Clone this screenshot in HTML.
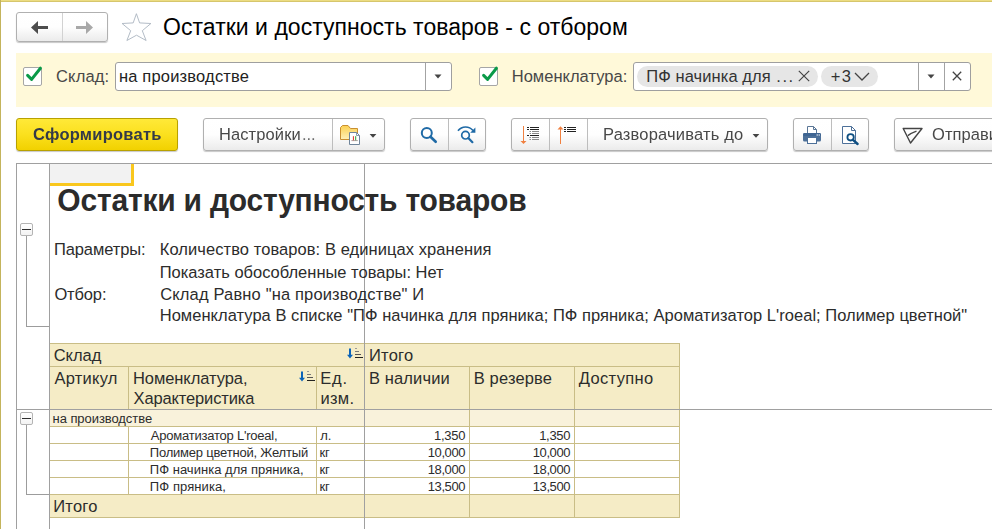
<!DOCTYPE html>
<html><head><meta charset="utf-8"><title>1C</title>
<style>
*{box-sizing:border-box;margin:0;padding:0}
html,body{width:992px;height:529px;overflow:hidden;background:#fff}
body{font-family:"Liberation Sans",sans-serif;font-size:16px;color:#333;position:relative}
.a{position:absolute;display:block}
.t{position:absolute;white-space:nowrap;display:block}
.btn{position:absolute;border:1px solid #b0b0b0;border-radius:3px;background:linear-gradient(#ffffff 0%,#fefefe 50%,#ebebeb 100%);box-shadow:0 1px 1px rgba(0,0,0,.22)}
.dv{position:absolute;top:0;bottom:0;width:1px;background:#bdbdbd}
.inp .dv{background:#a3a3a3}
.inp{position:absolute;border:1px solid #9f9f9f;border-radius:3px;background:#fff}
.chk{position:absolute;width:19px;height:19px;border:1px solid #a6a6a6;border-radius:2px;background:#fff}

</style></head><body>
<div class="a" style="left:0px;top:0px;width:992px;height:2px;background:linear-gradient(#f7e78c,#cbbb62);"></div>
<div class="a" style="left:0px;top:0px;width:1px;height:529px;background:#c4b45c;"></div>
<div class="btn" style="left:16px;top:12px;width:92px;height:30px;"><div class="dv" style="left:45px;background:#d2d2d2"></div></div>
<svg class="a" style="left:30px;top:20px" width="20" height="15" viewBox="0 0 20 15"><path d="M1 7.5 L8 1 V6 H18 V9 H8 V14 Z" fill="#4d4d4d"/></svg>
<svg class="a" style="left:74px;top:20px" width="20" height="15" viewBox="0 0 20 15"><path d="M19 7.5 L12 1 V6 H2 V9 H12 V14 Z" fill="#a8a8a8"/></svg>
<svg class="a" style="left:121px;top:13px" width="31" height="29" viewBox="0 0 31 29"><path d="M15.4 0.7 L18.6 9.9 L29.9 10.5 L21.3 17.7 L25.1 27.5 L15.5 22.2 L5.9 27.5 L9.7 17.7 L1.1 10.5 L12.2 9.9 Z" fill="#fff" stroke="#aab4bf" stroke-width="0.9"/></svg>
<div class="t" style="top:7px;font-size:23px;line-height:40px;color:#000;left:163.12px;letter-spacing:0.027512207031249146px;transform:scaleY(1.07);transform-origin:0 28px;">Остатки и доступность товаров - с отбором</div>
<div class="a" style="left:16px;top:53px;width:976px;height:54px;background:#fff9d9;"></div>
<div class="chk" style="left:23px;top:67px"></div>
<svg class="a" style="left:23px;top:66px" width="21" height="21" viewBox="0 0 21 21"><path d="M4.6 9.4 L8.6 13.4 L17.4 2.2" fill="none" stroke="#0a9a48" stroke-width="3" stroke-linecap="round" stroke-linejoin="round"/></svg>
<div class="t" style="top:66px;font-size:16.5px;line-height:20px;color:#484848;left:56.03px;letter-spacing:0.16559570312500113px;transform:scaleY(1.045);transform-origin:0 16px;">Склад:</div>
<div class="inp" style="left:115px;top:62px;width:337px;height:29px"><div class="dv" style="left:309px"></div></div>
<div class="t" style="top:66px;font-size:16.5px;line-height:20px;color:#222;left:118.97px;letter-spacing:0.17652762276785797px;transform:scaleY(1.045);transform-origin:0 16px;">на производстве</div>
<svg class="a" style="left:434px;top:74px" width="8" height="5" viewBox="0 0 8 5"><path d="M0.5 0.5 H7.5 L4 4.5 Z" fill="#444"/></svg>
<div class="chk" style="left:479px;top:67px"></div>
<svg class="a" style="left:479px;top:66px" width="21" height="21" viewBox="0 0 21 21"><path d="M4.6 9.4 L8.6 13.4 L17.4 2.2" fill="none" stroke="#0a9a48" stroke-width="3" stroke-linecap="round" stroke-linejoin="round"/></svg>
<div class="t" style="top:66px;font-size:16.5px;line-height:20px;color:#484848;left:511.71px;letter-spacing:0.02207031249999621px;transform:scaleY(1.045);transform-origin:0 16px;">Номенклатура:</div>
<div class="inp" style="left:633px;top:62px;width:338px;height:29px"><div class="dv" style="left:284px"></div><div class="dv" style="left:310px"></div></div>
<div class="a" style="left:637px;top:66px;width:181px;height:21px;background:#e6e6e6;border-radius:10.5px"></div>
<div class="a" style="left:821px;top:66px;width:57px;height:21px;background:#e6e6e6;border-radius:10.5px"></div>
<div class="t" style="top:66px;font-size:16.5px;line-height:20px;color:#333;left:646.31px;letter-spacing:0.07387319711538637px;transform:scaleY(1.045);transform-origin:0 16px;">ПФ начинка для</div>
<div class="t" style="top:66px;font-size:16.5px;line-height:20px;color:#333;left:776.31px;letter-spacing:1.513427734375px;transform:scaleY(1.045);transform-origin:0 16px;">...</div>
<svg class="a" style="left:798px;top:70px" width="12" height="12" viewBox="0 0 12 12"><path d="M0.8 0.8 L11.2 11.2 M11.2 0.8 L0.8 11.2" stroke="#444" stroke-width="1.15" fill="none"/></svg>
<div class="t" style="top:66px;font-size:16.5px;line-height:20px;color:#333;left:830.83px;letter-spacing:1.2298828125000227px;transform:scaleY(1.045);transform-origin:0 16px;">+3</div>
<svg class="a" style="left:854px;top:72px" width="16" height="9" viewBox="0 0 16 9"><path d="M1 1 L8 8 L15 1" stroke="#444" stroke-width="1.3" fill="none"/></svg>
<svg class="a" style="left:927px;top:74px" width="8" height="5" viewBox="0 0 8 5"><path d="M0.5 0.5 H7.5 L4 4.5 Z" fill="#444"/></svg>
<svg class="a" style="left:952px;top:71px" width="10" height="10" viewBox="0 0 10 10"><path d="M0.8 0.8 L9.2 9.2 M9.2 0.8 L0.8 9.2" stroke="#444" stroke-width="1.3" fill="none"/></svg>
<div class="btn" style="left:16px;top:118px;width:162px;height:33px;background:linear-gradient(#ffe938 0%,#fbe01e 50%,#f1d100 100%);border-color:#b8a100"></div>
<div class="t" style="top:124px;font-size:16.5px;line-height:20px;color:#343a48;left:32.98px;font-weight:bold;letter-spacing:0.24802024147727375px;transform:scaleY(1.045);transform-origin:0 16px;will-change:transform;">Сформировать</div>
<div class="btn" style="left:203px;top:118px;width:182px;height:33px;"><div class="dv" style="left:128px"></div></div>
<div class="t" style="top:124px;font-size:16.5px;line-height:20px;color:#484848;left:219.31px;letter-spacing:0.09388427734375071px;transform:scaleY(1.045);transform-origin:0 16px;will-change:transform;">Настройки</div>
<div class="t" style="top:124px;font-size:16.5px;line-height:20px;color:#6a6a6a;left:301.71px;letter-spacing:-0.13657226562500568px;transform:scaleY(1.045);transform-origin:0 16px;will-change:transform;">...</div>
<svg class="a" style="left:339px;top:124px" width="23" height="22" viewBox="0 0 23 22"><defs><linearGradient id="fg" x1="0" y1="0" x2="0" y2="1"><stop offset="0" stop-color="#fbd050"/><stop offset="1" stop-color="#fff0b8"/></linearGradient></defs>
<path d="M1.5 15.5 V3.5 L3.5 1.5 H9 L11.5 4.5 H18.5 V15.5 Z" fill="url(#fg)" stroke="#c98f30" stroke-width="1"/>
<path d="M10.5 8.5 H17.5 L20.5 11.5 V20.5 H10.5 Z" fill="#fff" stroke="#70859a" stroke-width="1"/>
<path d="M17.5 8.5 V11.5 H20.5" fill="none" stroke="#70859a" stroke-width="0.8"/>
<path d="M12.4 16.6 H18.8" stroke="#9a8a8a" stroke-width="0.8"/>
<path d="M14.4 12.2 V16.3" stroke="#e03020" stroke-width="1"/><path d="M16.7 12.2 V16.3" stroke="#30a030" stroke-width="1"/></svg>
<svg class="a" style="left:369px;top:134px" width="8" height="4" viewBox="0 0 8 4"><path d="M0.6 0 H7.4 L4 3.7 Z" fill="#444"/></svg>
<div class="btn" style="left:410px;top:118px;width:76px;height:33px;"><div class="dv" style="left:37px"></div></div>
<svg class="a" style="left:418px;top:125px" width="22" height="20" viewBox="0 0 22 20"><circle cx="8.8" cy="8" r="5" fill="none" stroke="#1f6aa6" stroke-width="2"/><path d="M12.5 11.7 L17.7 16.8" stroke="#1f6aa6" stroke-width="2.6" stroke-linecap="round"/></svg>
<svg class="a" style="left:455px;top:124px" width="24" height="21" viewBox="0 0 24 21"><circle cx="10.5" cy="11.2" r="3.8" fill="none" stroke="#1f6aa6" stroke-width="1.7"/><path d="M13.3 14 L17.4 18.2" stroke="#1f6aa6" stroke-width="2.2" stroke-linecap="round"/><path d="M3 6.8 C7 1.8 14 1.8 18 6.5" fill="none" stroke="#1f6aa6" stroke-width="1.7"/><path d="M20.4 3.6 V8.8 H15.2 Z" fill="#1f6aa6"/></svg>
<div class="btn" style="left:511px;top:118px;width:257px;height:33px;"><div class="dv" style="left:37px"></div><div class="dv" style="left:75px"></div></div>
<svg class="a" style="left:517px;top:126px" width="24" height="19" viewBox="0 0 24 19"><path d="M6.5 0 V17" stroke="#f08040" stroke-width="1"/><path d="M3.5 15 H9.5 L6.5 18 Z" fill="#f08040"/><path d="M10 1.5 H12 M13 1.5 H22" stroke="#222" stroke-width="1"/><path d="M10 3.5 H12 M13 3.5 H22" stroke="#222" stroke-width="1"/><path d="M12.5 5.5 H14 M15 5.5 H22" stroke="#8a8a8a" stroke-width="1"/><path d="M12.5 7.5 H14 M15 7.5 H22" stroke="#8a8a8a" stroke-width="1"/><path d="M10 9.5 H12 M13 9.5 H22" stroke="#222" stroke-width="1"/><path d="M12.5 11.5 H14 M15 11.5 H22" stroke="#8a8a8a" stroke-width="1"/><path d="M12.5 13.5 H14 M15 13.5 H22" stroke="#8a8a8a" stroke-width="1"/></svg>
<svg class="a" style="left:556px;top:126px" width="22" height="19" viewBox="0 0 22 19"><path d="M4.5 1 V18" stroke="#f08040" stroke-width="1"/><path d="M1.5 3.5 H7.5 L4.5 0.2 Z" fill="#f08040"/><path d="M8 1.5 H10 M11 1.5 H20" stroke="#222" stroke-width="1"/><path d="M8 3.5 H10 M11 3.5 H20" stroke="#222" stroke-width="1"/><path d="M8 5.5 H10 M11 5.5 H20" stroke="#222" stroke-width="1"/></svg>
<div class="t" style="top:124px;font-size:16.5px;line-height:20px;color:#484848;left:603.11px;letter-spacing:0.18313476562500455px;transform:scaleY(1.045);transform-origin:0 16px;will-change:transform;">Разворачивать до</div>
<svg class="a" style="left:752px;top:134px" width="8" height="4" viewBox="0 0 8 4"><path d="M0.6 0 H7.4 L4 3.7 Z" fill="#444"/></svg>
<div class="btn" style="left:793px;top:118px;width:76px;height:33px;"><div class="dv" style="left:37px"></div></div>
<svg class="a" style="left:802px;top:125px" width="20" height="20" viewBox="0 0 20 20"><path d="M5.5 8 V1.5 H11.5 L14.5 4.5 V8" fill="#fff" stroke="#5a7696" stroke-width="1"/><path d="M11.5 1.5 V4.5 H14.5" fill="none" stroke="#5a7696" stroke-width="1"/>
<rect x="1" y="8" width="18" height="8.5" rx="1.5" fill="#4d7099"/><rect x="1" y="8" width="18" height="3" rx="1.5" fill="#3f6592"/>
<rect x="5.5" y="12.5" width="9" height="6" fill="#fff" stroke="#4d7099" stroke-width="1"/><rect x="14.6" y="9.4" width="1.2" height="1.2" fill="#fff"/><rect x="16.6" y="9.4" width="1.2" height="1.2" fill="#fff"/></svg>
<svg class="a" style="left:841px;top:125px" width="20" height="21" viewBox="0 0 20 21"><path d="M1.5 1.5 H10.5 L14.5 5.5 V18.5 H1.5 Z" fill="#fff" stroke="#4d7099" stroke-width="1"/><path d="M10.5 1.5 V5.5 H14.5" fill="none" stroke="#4d7099" stroke-width="1"/>
<circle cx="9.6" cy="12.3" r="3.2" fill="#fff" stroke="#0e4f82" stroke-width="1.8"/><path d="M12 14.8 L16.6 19" stroke="#0e4f82" stroke-width="2.4" stroke-linecap="round"/></svg>
<div class="btn" style="left:894px;top:118px;width:120px;height:33px;"></div>
<svg class="a" style="left:901px;top:126px" width="24" height="19" viewBox="0 0 24 19"><path d="M2.2 2.5 H21 L9.5 17 Z" fill="none" stroke="#444" stroke-width="1.4" stroke-linejoin="round"/><path d="M6.8 9.6 C9 8 12 6.5 15.5 5.2" fill="none" stroke="#444" stroke-width="1.3"/></svg>
<div class="t" style="top:124px;font-size:16.5px;line-height:20px;color:#484848;left:932.13px;letter-spacing:0.05px;transform:scaleY(1.045);transform-origin:0 16px;will-change:transform;">Отправить</div>
<div class="a" style="left:50px;top:344px;width:630px;height:65px;background:#f5ecc6;"></div>
<div class="a" style="left:50px;top:410px;width:630px;height:16px;background:#f9f2db;"></div>
<div class="a" style="left:50px;top:495px;width:630px;height:22px;background:#f5ecc6;"></div>
<div class="a" style="left:50px;top:164px;width:81px;height:19px;background:#f2f2f2;"></div>
<div class="a" style="left:131px;top:164px;width:3px;height:22px;background:#f9c71d;"></div>
<div class="a" style="left:50px;top:183px;width:84px;height:3px;background:#f9c71d;"></div>
<div class="a" style="left:50px;top:343px;width:630px;height:1px;background:#c9bd86;"></div>
<div class="a" style="left:50px;top:366px;width:630px;height:1px;background:#c9bd86;"></div>
<div class="a" style="left:50px;top:426px;width:630px;height:1px;background:#c9bd86;"></div>
<div class="a" style="left:50px;top:443px;width:630px;height:1px;background:#c9bd86;"></div>
<div class="a" style="left:50px;top:460px;width:630px;height:1px;background:#c9bd86;"></div>
<div class="a" style="left:50px;top:477px;width:630px;height:1px;background:#c9bd86;"></div>
<div class="a" style="left:50px;top:494px;width:630px;height:1px;background:#c9bd86;"></div>
<div class="a" style="left:50px;top:517px;width:630px;height:1px;background:#c9bd86;"></div>
<div class="a" style="left:679px;top:343px;width:1px;height:175px;background:#c9bd86;"></div>
<div class="a" style="left:128px;top:367px;width:1px;height:42px;background:#c9bd86;"></div>
<div class="a" style="left:128px;top:427px;width:1px;height:67px;background:#c9bd86;"></div>
<div class="a" style="left:316px;top:367px;width:1px;height:42px;background:#c9bd86;"></div>
<div class="a" style="left:316px;top:427px;width:1px;height:67px;background:#c9bd86;"></div>
<div class="a" style="left:469px;top:367px;width:1px;height:151px;background:#c9bd86;"></div>
<div class="a" style="left:574px;top:367px;width:1px;height:151px;background:#c9bd86;"></div>
<div class="a" style="left:16px;top:163px;width:976px;height:1px;background:#a0a0a0;"></div>
<div class="a" style="left:16px;top:163px;width:1px;height:366px;background:#a0a0a0;"></div>
<div class="a" style="left:49px;top:164px;width:1px;height:365px;background:#a0a0a0;"></div>
<div class="a" style="left:364px;top:164px;width:1px;height:365px;background:#a0a0a0;"></div>
<div class="a" style="left:17px;top:409px;width:975px;height:1px;background:#a0a0a0;"></div>
<div class="a" style="left:20px;top:223px;width:13px;height:13px;background:linear-gradient(#ffffff,#f3f3f3);border:1px solid #b4b4b4;border-radius:2px"></div>
<div class="a" style="left:22px;top:229px;width:9px;height:1px;background:#2e2e2e;"></div>
<div class="a" style="left:26px;top:236px;width:1px;height:90px;background:#9c9c9c;"></div>
<div class="a" style="left:26px;top:326px;width:23px;height:1px;background:#9c9c9c;"></div>
<div class="a" style="left:20px;top:412px;width:13px;height:13px;background:linear-gradient(#ffffff,#f3f3f3);border:1px solid #b4b4b4;border-radius:2px"></div>
<div class="a" style="left:22px;top:418px;width:9px;height:1px;background:#2e2e2e;"></div>
<div class="a" style="left:26px;top:425px;width:1px;height:69px;background:#9c9c9c;"></div>
<div class="a" style="left:26px;top:494px;width:23px;height:1px;background:#9c9c9c;"></div>
<div class="t" style="top:181px;font-size:30px;line-height:40px;color:#2b2b2b;left:57.36px;font-weight:bold;letter-spacing:-0.21335100446428612px;transform:scaleY(1.03);transform-origin:0 30px;">Остатки и доступность товаров</div>
<div class="t" style="top:239px;font-size:16.5px;line-height:20px;color:#2c2c2c;left:53.91px;letter-spacing:-0.0954481336805565px;transform:scaleY(1.045);transform-origin:0 16px;">Параметры:</div>
<div class="t" style="top:239px;font-size:16.5px;line-height:20px;color:#2c2c2c;left:159.71px;letter-spacing:0.07249691611842106px;transform:scaleY(1.045);transform-origin:0 16px;">Количество товаров: В единицах хранения</div>
<div class="t" style="top:262px;font-size:16.5px;line-height:20px;color:#2c2c2c;left:159.71px;letter-spacing:-0.0043670654296867895px;transform:scaleY(1.045);transform-origin:0 16px;">Показать обособленные товары: Нет</div>
<div class="t" style="top:284px;font-size:16.5px;line-height:20px;color:#2c2c2c;left:54.43px;letter-spacing:-0.14302734375000056px;transform:scaleY(1.045);transform-origin:0 16px;">Отбор:</div>
<div class="t" style="top:284px;font-size:16.5px;line-height:20px;color:#2c2c2c;left:160.23px;letter-spacing:0.15225260416666705px;transform:scaleY(1.045);transform-origin:0 16px;">Склад Равно "на производстве" И</div>
<div class="t" style="top:305px;font-size:16.5px;line-height:20px;color:#2c2c2c;left:159.71px;letter-spacing:0.03328704833984375px;transform:scaleY(1.045);transform-origin:0 16px;">Номенклатура В списке "ПФ начинка для пряника; ПФ пряника; Ароматизатор L'roeal; Полимер цветной"</div>
<div class="t" style="top:345px;font-size:16.5px;line-height:20px;color:#2c2c2c;left:53.73px;letter-spacing:-0.02241210937500071px;transform:scaleY(1.045);transform-origin:0 16px;">Склад</div>
<div class="t" style="top:345px;font-size:16.5px;line-height:20px;color:#2c2c2c;left:368.91px;letter-spacing:0.25444335937500284px;transform:scaleY(1.045);transform-origin:0 16px;">Итого</div>
<div class="t" style="top:368px;font-size:16.5px;line-height:20px;color:#2c2c2c;left:54.50px;letter-spacing:0.23457031249999952px;transform:scaleY(1.045);transform-origin:0 16px;">Артикул</div>
<div class="t" style="top:368px;font-size:16.5px;line-height:20px;color:#2c2c2c;left:132.91px;letter-spacing:-0.05774739583333144px;transform:scaleY(1.045);transform-origin:0 16px;">Номенклатура,</div>
<div class="t" style="top:388px;font-size:16.5px;line-height:20px;color:#2c2c2c;left:133.54px;letter-spacing:-0.1391751802884624px;transform:scaleY(1.045);transform-origin:0 16px;">Характеристика</div>
<div class="t" style="top:368px;font-size:16.5px;line-height:20px;color:#2c2c2c;left:320.21px;letter-spacing:0.8811279296874943px;transform:scaleY(1.045);transform-origin:0 16px;">Ед.</div>
<div class="t" style="top:388px;font-size:16.5px;line-height:20px;color:#2c2c2c;left:320.47px;letter-spacing:0.2705891927083333px;transform:scaleY(1.045);transform-origin:0 16px;">изм.</div>
<div class="t" style="top:368px;font-size:16.5px;line-height:20px;color:#2c2c2c;left:368.91px;letter-spacing:0.13789672851562784px;transform:scaleY(1.045);transform-origin:0 16px;">В наличии</div>
<div class="t" style="top:368px;font-size:16.5px;line-height:20px;color:#2c2c2c;left:473.71px;letter-spacing:0.14849243164061932px;transform:scaleY(1.045);transform-origin:0 16px;">В резерве</div>
<div class="t" style="top:368px;font-size:16.5px;line-height:20px;color:#2c2c2c;left:578.80px;letter-spacing:0.3380719866071494px;transform:scaleY(1.045);transform-origin:0 16px;">Доступно</div>
<svg class="a" style="left:347px;top:348px" width="17" height="11" viewBox="0 0 17 11"><path d="M3 0.5 V8" stroke="#0b63b8" stroke-width="2"/><path d="M0 6.8 H6 L3 10.4 Z" fill="#0b63b8"/><path d="M8 0.5 H10" stroke="#9a9a9a" stroke-width="1"/><path d="M8 3.5 H12" stroke="#7a7a7a" stroke-width="1"/><path d="M8 6.5 H14" stroke="#555" stroke-width="1"/><path d="M8 9.5 H16" stroke="#222" stroke-width="1"/></svg>
<svg class="a" style="left:299px;top:371px" width="17" height="11" viewBox="0 0 17 11"><path d="M3 0.5 V8" stroke="#0b63b8" stroke-width="2"/><path d="M0 6.8 H6 L3 10.4 Z" fill="#0b63b8"/><path d="M8 0.5 H10" stroke="#9a9a9a" stroke-width="1"/><path d="M8 3.5 H12" stroke="#7a7a7a" stroke-width="1"/><path d="M8 6.5 H14" stroke="#555" stroke-width="1"/><path d="M8 9.5 H16" stroke="#222" stroke-width="1"/></svg>
<div class="t" style="top:409px;font-size:13px;line-height:20px;color:#2c2c2c;left:52.59px;letter-spacing:-0.06697823660714367px;transform:scaleY(1.04);transform-origin:0 14px;">на производстве</div>
<div class="t" style="top:426px;font-size:13px;line-height:20px;color:#2c2c2c;left:150.80px;letter-spacing:-0.22364746093749943px;transform:scaleY(1.04);transform-origin:0 14px;">Ароматизатор L'roeal,</div>
<div class="t" style="top:426px;font-size:13px;line-height:20px;color:#2c2c2c;left:320.20px;transform:scaleY(1.04);transform-origin:0 14px;">л.</div>
<div class="t" style="top:426px;font-size:13px;line-height:20px;color:#2c2c2c;left:433.99px;letter-spacing:-0.24887695312500568px;transform:scaleY(1.04);transform-origin:0 14px;">1,350</div>
<div class="t" style="top:426px;font-size:13px;line-height:20px;color:#2c2c2c;left:539.19px;letter-spacing:-0.29887695312498863px;transform:scaleY(1.04);transform-origin:0 14px;">1,350</div>
<div class="t" style="top:443px;font-size:13px;line-height:20px;color:#2c2c2c;left:149.78px;letter-spacing:-0.20037730823863792px;transform:scaleY(1.04);transform-origin:0 14px;">Полимер цветной, Желтый</div>
<div class="t" style="top:443px;font-size:13px;line-height:20px;color:#2c2c2c;left:319.39px;transform:scaleY(1.04);transform-origin:0 14px;">кг</div>
<div class="t" style="top:443px;font-size:13px;line-height:20px;color:#2c2c2c;left:427.69px;letter-spacing:-0.38509765625000225px;transform:scaleY(1.04);transform-origin:0 14px;">10,000</div>
<div class="t" style="top:443px;font-size:13px;line-height:20px;color:#2c2c2c;left:532.69px;letter-spacing:-0.3850976562499909px;transform:scaleY(1.04);transform-origin:0 14px;">10,000</div>
<div class="t" style="top:460px;font-size:13px;line-height:20px;color:#2c2c2c;left:149.78px;letter-spacing:0.025199751420455063px;transform:scaleY(1.04);transform-origin:0 14px;">ПФ начинка для пряника,</div>
<div class="t" style="top:460px;font-size:13px;line-height:20px;color:#2c2c2c;left:319.39px;transform:scaleY(1.04);transform-origin:0 14px;">кг</div>
<div class="t" style="top:460px;font-size:13px;line-height:20px;color:#2c2c2c;left:427.69px;letter-spacing:-0.38509765625000225px;transform:scaleY(1.04);transform-origin:0 14px;">18,000</div>
<div class="t" style="top:460px;font-size:13px;line-height:20px;color:#2c2c2c;left:532.69px;letter-spacing:-0.3850976562499909px;transform:scaleY(1.04);transform-origin:0 14px;">18,000</div>
<div class="t" style="top:477px;font-size:13px;line-height:20px;color:#2c2c2c;left:149.78px;letter-spacing:0.09290039062499886px;transform:scaleY(1.04);transform-origin:0 14px;">ПФ пряника,</div>
<div class="t" style="top:477px;font-size:13px;line-height:20px;color:#2c2c2c;left:319.39px;transform:scaleY(1.04);transform-origin:0 14px;">кг</div>
<div class="t" style="top:477px;font-size:13px;line-height:20px;color:#2c2c2c;left:427.69px;letter-spacing:-0.38509765625000225px;transform:scaleY(1.04);transform-origin:0 14px;">13,500</div>
<div class="t" style="top:477px;font-size:13px;line-height:20px;color:#2c2c2c;left:532.69px;letter-spacing:-0.3850976562499909px;transform:scaleY(1.04);transform-origin:0 14px;">13,500</div>
<div class="t" style="top:496px;font-size:16.5px;line-height:20px;color:#2c2c2c;left:53.21px;letter-spacing:0.2544433593749993px;transform:scaleY(1.045);transform-origin:0 16px;">Итого</div>
</body></html>
